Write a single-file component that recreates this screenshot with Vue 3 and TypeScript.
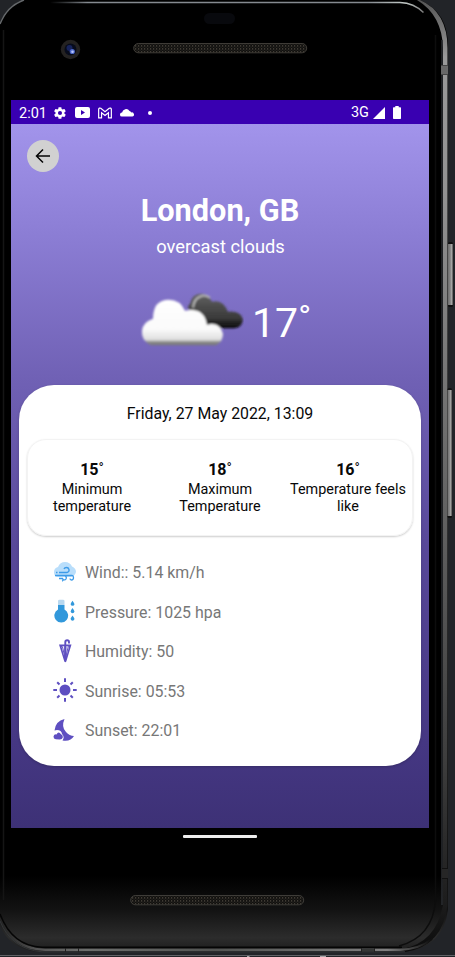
<script setup lang="ts">
interface Temp { value: number; label: string }
interface Detail { icon: 'wind' | 'pressure' | 'humidity' | 'sunrise' | 'sunset'; text: string }

const temps: Temp[] = [
  { value: 15, label: 'Minimum temperature' },
  { value: 18, label: 'Maximum Temperature' },
  { value: 16, label: 'Temperature feels like' },
]
const details: Detail[] = [
  { icon: 'wind', text: 'Wind:: 5.14 km/h' },
  { icon: 'pressure', text: 'Pressure: 1025 hpa' },
  { icon: 'humidity', text: 'Humidity: 50' },
  { icon: 'sunrise', text: 'Sunrise: 05:53' },
  { icon: 'sunset', text: 'Sunset: 22:01' },
]
</script>

<template>
  <div class="device">
    <svg class="frame" width="455" height="957" viewBox="0 0 455 957" aria-hidden="true">
      <defs>
        <linearGradient id="body" x1="0" y1="0" x2="0" y2="1">
          <stop offset="0" stop-color="#000" />
          <stop offset=".92" stop-color="#000" />
          <stop offset=".955" stop-color="#121212" />
          <stop offset=".985" stop-color="#2c2c2c" />
          <stop offset="1" stop-color="#1c1c1c" />
        </linearGradient>
        <linearGradient id="rail" x1="0" y1="0" x2="0" y2="1">
          <stop offset="0" stop-color="#555" />
          <stop offset=".06" stop-color="#999" />
          <stop offset=".2" stop-color="#929292" />
          <stop offset=".35" stop-color="#7c7c7c" />
          <stop offset=".55" stop-color="#606060" />
          <stop offset=".8" stop-color="#3d3d3d" />
          <stop offset=".95" stop-color="#1c1c1c" />
          <stop offset="1" stop-color="#0b0b0b" />
        </linearGradient>
        <linearGradient id="key" x1="0" y1="0" x2="1" y2="0">
          <stop offset="0" stop-color="#6b6b6b" />
          <stop offset=".65" stop-color="#909090" />
          <stop offset="1" stop-color="#c8c8c5" />
        </linearGradient>
        <linearGradient id="topline" gradientUnits="userSpaceOnUse" x1="50" y1="0" x2="424" y2="0">
          <stop offset="0" stop-color="#777d83" stop-opacity="0" />
          <stop offset=".1" stop-color="#858a90" />
          <stop offset=".85" stop-color="#858a90" />
          <stop offset=".95" stop-color="#c3cac7" />
          <stop offset="1" stop-color="#777" />
        </linearGradient>
        <linearGradient id="bottomline" gradientUnits="userSpaceOnUse" x1="0" y1="0" x2="430" y2="0">
          <stop offset="0" stop-color="#222" />
          <stop offset=".09" stop-color="#555" />
          <stop offset=".2" stop-color="#6d6f6d" />
          <stop offset=".5" stop-color="#525452" />
          <stop offset=".9" stop-color="#808080" />
          <stop offset="1" stop-color="#111" />
        </linearGradient>
        <pattern id="mesh" width="3" height="3" patternUnits="userSpaceOnUse">
          <rect width="3" height="3" fill="#11100e" />
          <rect width="1.2" height="1.7" fill="#3f3b34" />
          <rect x="1.6" y="1.6" width="1" height="1.2" fill="#2a2824" />
        </pattern>
      </defs>
      <rect width="455" height="957" fill="#222428" />
      <path d="M0 22Q7 6 24 0H420Q448 12 448 46V910Q443 947 405 952H38Q10 949 0 926Z" fill="url(#body)" />
      <path d="M0 24Q7 6 24 0" fill="none" stroke="#65686b" stroke-width="1.500" />
      <path d="M50 2.500H400Q414 3 423.500 12.500" fill="none" stroke="url(#topline)" stroke-width="1.500" />
      <path d="M420 0Q447.500 12 447.500 48V905Q443 946 405 952L402 949Q436 943 443 905V48Q442 15 417 0Z" fill="url(#rail)" />
      <path d="M442 40V905" stroke="#2a2c30" stroke-width="1.500" />
      <path d="M435.500 35V900Q433 937 399 946" fill="none" stroke="#0d0d0d" stroke-width="1.500" />
      <path d="M3.500 30V900" fill="none" stroke="#151515" stroke-width="1.500" />
      <path d="M0 918Q12 949 45 949.800H400Q420 949 432 939" fill="none" stroke="url(#bottomline)" stroke-width="2.200" />
      <path d="M0 914Q12 946 42 947.300H402" fill="none" stroke="#050505" stroke-width="1.500" />
      <path d="M0 921Q11 949 42 951.800H405" fill="none" stroke="#333638" />
      <rect x="441" y="65" width="7" height="10" fill="#686868" />
      <path d="M441 65.500H448M441 74.500H448" stroke="#454545" />
      <rect x="442" y="868" width="6" height="10" fill="#262626" />
      <path d="M442 868.500H448M442 878.500H448" stroke="#111" />
      <path d="M65.500 948V952M78.500 948V952M361.500 948V952M374.500 948V952" stroke="#222" />
      <rect x="362" y="948.500" width="12" height="3" fill="#353736" />
      <rect x="448" y="242" width="5" height="65" rx="1.500" fill="#111" />
      <rect x="448" y="244" width="4.500" height="61" fill="url(#key)" />
      <rect x="447.500" y="388" width="4.500" height="130" rx="1.500" fill="#111" />
      <rect x="447.500" y="390" width="4" height="126" fill="url(#key)" />
      <path d="M0 955.500H455" stroke="#616266" />
      <path d="M247 956.500H249.500M320 956.500H326" stroke="#a8a8aa" />
      <rect x="204" y="13" width="31" height="11" rx="5.500" fill="#08090d" />
      <circle cx="70.500" cy="49.500" r="9.700" fill="#242221" />
      <circle cx="70.500" cy="49.500" r="6" fill="#070b1b" />
      <circle cx="69.500" cy="48" r="3" fill="#17235b" />
      <circle cx="72.300" cy="51.500" r="2.600" fill="#4c67c8" />
      <circle cx="72.500" cy="51.800" r="1.300" fill="#b8c7ff" />
      <rect x="133.700" y="43.500" width="173" height="9.300" rx="4.600" fill="url(#mesh)" stroke="#3e3b36" />
      <rect x="130.700" y="895.500" width="173" height="9.300" rx="4.600" fill="url(#mesh)" stroke="#3e3c38" />
    </svg>

    <main class="screen">
      <header class="status">
        <span class="clock">2:01</span>
        <svg class="gear" viewBox="0 0 24 24"><path fill="#fff" fill-rule="evenodd" d="M19.400 13a7.500 7.500 0 0 0 0-2l2.100-1.600c.2-.2.300-.5.100-.7l-2-3.500c-.1-.2-.4-.3-.6-.2l-2.500 1a7.700 7.700 0 0 0-1.700-1l-.4-2.600a.5.500 0 0 0-.5-.4h-4a.5.500 0 0 0-.5.400L9 5a8 8 0 0 0-1.700 1l-2.500-1a.5.500 0 0 0-.6.200l-2 3.500a.5.500 0 0 0 .1.700L4.500 11a7.500 7.500 0 0 0 0 2l-2.200 1.600a.5.500 0 0 0-.1.700l2 3.500c.1.200.4.300.6.200l2.500-1a8 8 0 0 0 1.700 1l.4 2.600c0 .2.200.4.500.4h4c.2 0 .5-.2.500-.4l.4-2.600a8 8 0 0 0 1.700-1l2.500 1c.2.100.5 0 .6-.2l2-3.500a.5.500 0 0 0-.1-.7ZM12 15.500a3.500 3.500 0 1 1 0-7 3.500 3.500 0 0 1 0 7Z" /></svg>
        <svg class="video" viewBox="0 0 15 11"><path fill="#fff" fill-rule="evenodd" d="M2 0H13Q15 0 15 2V9Q15 11 13 11H2Q0 11 0 9V2Q0 0 2 0ZM6 3V8L10 5.500Z" /></svg>
        <svg class="mail" viewBox="0 0 15 12"><path fill="none" stroke="#fff" stroke-width="1.250" d="M.7 11.200V2Q1.200.1 3 1L7.500 4.600 12 1Q13.800.1 14.300 2V11.200H11.200V5.700L7.500 8.600 3.800 5.700V11.200Z" /></svg>
        <svg class="mini-cloud" viewBox="0 0 14 9"><path fill="#fff" d="M1.800 8.500A1.800 1.800 0 0 1 2.100 4.600 4 4 0 0 1 9.500 3a3 3 0 0 1 1.800 1.500A2 2 0 0 1 12.500 8.500Z" /></svg>
        <i class="dot"></i>
        <span class="network">3G</span>
        <svg class="signal" viewBox="0 0 12 12"><path fill="#fff" d="M0 12H12V0Z" /></svg>
        <svg class="battery" viewBox="0 0 8 13"><path fill="#fff" d="M2.300 0H5.700V1.300H7.300Q8 1.300 8 2V12.300Q8 13 7.300 13H.7Q0 13 0 12.300V2Q0 1.300.7 1.300H2.300Z" /></svg>
      </header>

      <section class="weather">
        <button class="back" aria-label="Back"><svg viewBox="0 0 16 16"><path d="M15 8H1.500M8 1.500 1.500 8 8 14.500" fill="none" stroke="#050505" stroke-width="1.500" /></svg></button>
        <h1>London, GB</h1>
        <p class="sky">overcast clouds</p>
        <div class="now">
          <svg class="clouds" width="104" height="56" viewBox="0 0 104 56" aria-hidden="true">
            <defs>
              <linearGradient id="dark" x1="0" y1="0" x2="0" y2="1"><stop stop-color="#646464" /><stop offset=".3" stop-color="#505050" /><stop offset=".7" stop-color="#3a3a3a" /><stop offset="1" stop-color="#090909" /></linearGradient>
              <linearGradient id="light" x1="0" y1="0" x2="0" y2="1"><stop stop-color="#fff" /><stop offset=".65" stop-color="#fafafa" /><stop offset=".88" stop-color="#dedede" /><stop offset=".93" stop-color="#898989" /><stop offset="1" stop-color="#777" /></linearGradient>
              <filter id="soft" x="-5%" y="-5%" width="110%" height="110%"><feGaussianBlur stdDeviation=".8" /></filter>
            </defs>
            <g filter="url(#soft)" transform="translate(0 .7)">
              <path fill="url(#dark)" d="M61 24Q43 18 50 12Q52 2 61 2Q68 2 72 10Q83 7 88 20Q101 19 103 28Q102 36 94 36.500H63Z" />
              <path fill="none" stroke="#b5b5b5" stroke-width="2" d="M53 16Q54 7 60 5Q65 2 70 6" />
              <path fill="url(#light)" d="M11 53.500Q1 49 2 39Q3 30 13 27Q13 8 29 8Q40 8 45 19Q64 15 67 33Q80 30 83 42Q83 50 76 53.500Z" />
            </g>
          </svg>
          <span class="degree">17˚</span>
        </div>

        <article class="card">
          <time>Friday, 27 May 2022, 13:09</time>
          <div class="temps">
            <div v-for="temp in temps" :key="temp.value" class="temp">
              <strong>{{ temp.value }}˚</strong>
              <p>{{ temp.label }}</p>
            </div>
          </div>
          <ul class="details">
            <li v-for="item in details" :key="item.icon">
              <svg viewBox="0 0 24 24" aria-hidden="true">
                <g v-if="item.icon === 'wind'">
                  <path fill="#b9defb" d="M5 17Q1 17 1 12Q1 8 5 7Q7 2 12 2Q17 2 19 6.500Q23 8 23 12Q22 16 18 17Z" />
                  <path fill="none" stroke="#3d9be8" stroke-width="1.300" d="M6 12.500H14Q16.500 12 16 9.500Q15.500 7.500 13.500 7.500Q11.500 7.500 11 9M2 15.500H19Q20.500 15.500 20.500 17.500Q20.500 20 18.500 20Q17 20 17 18.500M12 15.500Q14 17 13 19Q12 20.500 10 19.500M3 12.500H4.500M6 18.500H9.500Q11 20.500 9 21" />
                </g>
                <g v-else-if="item.icon === 'pressure'">
                  <path fill="#b9d8ef" d="M5 6V2Q5 .8 6.500.8H10Q11.500.8 11.500 2V6Z" />
                  <path fill="#3298db" d="M5 6H11.500V10.500A6.900 6.900 0 1 1 5 10.500Z" />
                  <path fill="#3298db" d="M19.500 1.700Q17.400 4.500 17.600 5.300A2 2 0 0 0 21.500 5.300Q21.500 4.500 19.500 1.700ZM19.500 9Q17.400 11.800 17.600 12.600A2 2 0 0 0 21.500 12.600Q21.500 11.800 19.500 9ZM19.500 16.500Q17.400 19.300 17.600 20.100A2 2 0 0 0 21.500 20.100Q21.500 19.300 19.500 16.500Z" />
                </g>
                <g v-else-if="item.icon === 'humidity'" fill="none" stroke="#5e4fc1" stroke-width="1.900">
                  <path d="M16 4.500V3Q16 1.200 14.200 1.200Q12.300 1.200 12.300 3V20" />
                  <path fill="#5e4fc1" fill-rule="evenodd" stroke="none" d="M6 5.500H18.500L13.300 22.500Q12.300 24 11.300 22.500ZM8.600 8 11.300 17.500V7ZM13.300 7V17.500L16 8Z" />
                  <path stroke-width="1" d="M9.500 8 12.300 20 15.200 8" />
                </g>
                <g v-else-if="item.icon === 'sunrise'" fill="#5e4fc1" stroke="#5e4fc1" stroke-width="2">
                  <circle cx="12" cy="12" r="5.500" stroke="none" />
                  <path d="M12 .3V4M12 20V23.700M.3 12H4M20 12H23.700M4.200 4.200 6.500 6.500M17.500 17.500 19.800 19.800M4.200 19.800 6.500 17.500M17.500 6.500 19.800 4.200" />
                </g>
                <g v-else fill="#5e4fc1">
                  <path d="M11.500 1Q8 9 13 14Q16.500 18 21 18Q17.500 24 9.500 22.500Q12 19 9 16Q8.500 12 4 12L1.500 12.500Q2.500 3 11.500 1Z" />
                  <path d="M2.800 21.300Q.4 21 .5 18.500Q1 16 3.500 16.400Q5.500 12.500 8 16.200Q10.300 17 9.800 19.500Q9 21.700 6.500 21.500Z" />
                </g>
              </svg>
              <span>{{ item.text }}</span>
            </li>
          </ul>
        </article>
      </section>
    </main>
    <div class="home"></div>
  </div>
</template>

<style>
body { margin: 0; background: #222428; }
</style>

<style scoped>
* { box-sizing: border-box; }
.device { position: relative; width: 455px; height: 957px; overflow: hidden; padding: 100px 26px 0 11px; font-family: Roboto, sans-serif; isolation: isolate; }
.frame { position: absolute; inset: 0; z-index: -1; }
.screen { width: 418px; height: 728px; }
.status { display: flex; align-items: center; height: 24px; padding: 1px 28.500px 0 8px; background: #3900b1; color: #fff; font-size: 14.5px; }
.clock { width: 28px; margin-right: 6px; padding-top: 1px; white-space: nowrap; }
.status svg { display: block; flex: none; }
.gear { width: 14px; height: 14px; margin-right: 8px; }
.video { width: 15px; height: 11px; margin-right: 8px; }
.mail { width: 14px; height: 12px; margin-right: 8px; }
.mini-cloud { width: 14px; height: 9px; }
.dot { width: 4px; height: 4px; margin-left: 13.500px; border-radius: 50%; background: #fff; }
.network { margin-left: auto; margin-right: 4px; }
.signal { width: 12px; height: 12px; margin-right: 7.500px; }
.battery { width: 8px; height: 13px; }
.weather { height: 704px; padding: 16px 8px 0; background: linear-gradient(#a294eb 0, #8b7dd4 16%, #7061b5 36%, #584899 60%, #453783 88%, #3d3176 100%); text-align: center; }
.back { display: grid; place-items: center; width: 32px; height: 32px; margin-left: 8px; padding: 0; border: 0; border-radius: 50%; background: #d1d1d1; }
.back svg { display: block; width: 16px; height: 16px; }
h1 { margin: 20px 0 0; color: #fff; font-size: 30.700px; line-height: 38px; font-weight: 700; }
.sky { margin: 5px 0 0; padding-left: 1px; color: #fff; font-size: 18.300px; line-height: 24px; }
.now { display: flex; height: 60px; margin-top: 32px; padding-left: 121px; color: #fff; text-align: left; }
.degree { margin-left: 8px; font-size: 41px; line-height: 65px; }
.card { height: 381px; margin-top: 34px; padding: 18px 8px 0; border-radius: 35px; background: #fff; box-shadow: 0 1px 3px #0003; color: #080808; }
.card time { display: block; height: 22px; font-size: 15.850px; line-height: 22px; }
.temps { display: grid; grid-template-columns: repeat(3, 1fr); height: 97px; margin-top: 14px; padding-top: 20px; border: 1px solid #f3f3f3; border-radius: 19px; box-shadow: 0 1px 2px #0003; }
.temp strong { display: block; font-size: 16px; line-height: 19px; }
.temp p { margin: 2px 0 0; padding: 0 4px; font-size: 14.400px; line-height: 17px; }
.details { display: flex; flex-direction: column; margin: 16px 0 0; padding: 0 0 0 26px; list-style: none; color: #777; text-align: left; }
.details li { display: flex; align-items: center; height: 39.500px; gap: 8px; font-size: 15.900px; }
.details span { padding-top: 2px; }
.details svg { display: block; width: 24px; height: 24px; }
.home { width: 74px; height: 3px; margin: 7px 0 0 172px; border-radius: 1px; background: #eee; }
</style>
